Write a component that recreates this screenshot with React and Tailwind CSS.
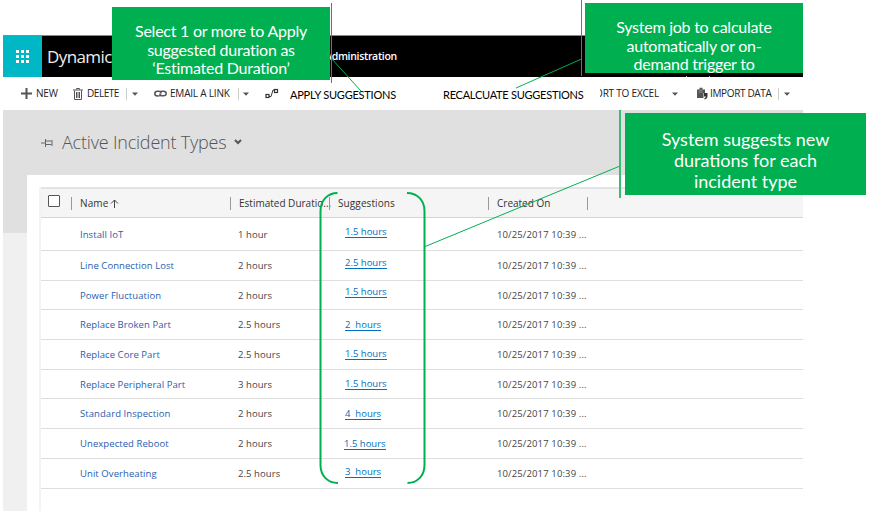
const UI = "font-['Open_Sans','Noto_Sans',sans-serif]";
const CAL = "font-['Lato','Open_Sans',sans-serif]";

const rows = [
  { name: 'Install IoT', est: '1 hour', sug: '1.5 hours', h: 'h-[33px]', pos: 'top-[-3px]' },
  { name: 'Line Connection Lost', est: '2 hours', sug: '2.5 hours', h: 'h-[30px]', pos: 'top-[-3px]' },
  { name: 'Power Fluctuation', est: '2 hours', sug: '1.5 hours', h: 'h-[29px]', pos: 'top-[-4px]' },
  { name: 'Replace Broken Part', est: '2.5 hours', sug: '2  hours', h: 'h-[30px]', pos: 'top-0' },
  { name: 'Replace Core Part', est: '2.5 hours', sug: '1.5 hours', h: 'h-[30px]', pos: 'top-[-1px]' },
  { name: 'Replace Peripheral Part', est: '3 hours', sug: '1.5 hours', h: 'h-[29px]', pos: 'top-[-1px]' },
  { name: 'Standard Inspection', est: '2 hours', sug: '4  hours', h: 'h-[30px]', pos: 'top-0' },
  { name: 'Unexpected Reboot', est: '2 hours', sug: '1.5 hours', h: 'h-[30px]', pos: 'top-0 left-[-1px]' },
  { name: 'Unit Overheating', est: '2.5 hours', sug: '3  hours', h: 'h-[30px]', pos: 'top-[-2px]' },
];

function Caret() {
  return (
    <svg width="6" height="4" viewBox="0 0 6 4" className="shrink-0">
      <path d="M0 .5h6L3 3.7z" fill="#555" />
    </svg>
  );
}

function Slot({ w, children }) {
  return <div className={`flex h-full shrink-0 items-center ${w}`}>{children}</div>;
}

function Toolbar() {
  const label = 'text-[10px] tracking-[-0.2px] whitespace-nowrap text-[#222]';
  const cal = `${CAL} text-[11px] whitespace-nowrap text-black pt-[3px]`;
  return (
    <div className="flex h-[33px] items-center bg-white pl-[18px]">
      <Slot w="w-[15px]">
        <svg width="11" height="11" viewBox="0 0 11 11"><path d="M5.5 0v11M0 5.5h11" stroke="#555" strokeWidth="2" /></svg>
      </Slot>
      <Slot w="w-[37px]"><span className={label}>NEW</span></Slot>
      <Slot w="w-[14px]">
        <svg width="10" height="12" viewBox="0 0 10 12" fill="none" stroke="#555">
          <path d="M0 2h10M3.5 1.6V.5h3v1.100M1.500 2.500v9h7v-9M3.500 4v6M5 4v6M6.500 4v6" />
        </svg>
      </Slot>
      <Slot w="w-[39px]"><span className={`${label} -mr-2 tracking-[-0.45px]`}>DELETE</span></Slot>
      <Slot w="w-[6px]"><span className="h-3 w-px bg-[#ccc]" /></Slot>
      <Slot w="w-[22px]"><Caret /></Slot>
      <Slot w="w-[16px]">
        <svg width="13" height="7" viewBox="0 0 13 7" fill="none" stroke="#555" strokeWidth="1.5">
          <path d="M7 5C6.5 6 5.4 6 3.6 6 1.6 6 .8 4.800 .8 3.500S1.800 1.200 3.500 1.200h1.200C6 1.200 7 2 7.200 3.500M6 2C6.500 1 7.700 1.200 9.300 1.200c2 0 2.900 1 2.900 2.300S11.200 5.800 9.500 5.800H8.300C7 5.800 6 5 5.800 3.600" />
        </svg>
      </Slot>
      <Slot w="w-[68px]"><span className={label}>EMAIL A LINK</span></Slot>
      <Slot w="w-[5px]"><span className="h-3 w-px bg-[#ccc]" /></Slot>
      <Slot w="w-[22px]"><Caret /></Slot>
      <Slot w="w-[25px]">
        <svg width="14" height="11" viewBox="0 0 14 11" fill="none" stroke="#333" strokeWidth="1.2">
          <rect x="1" y="6.500" width="3" height="3" /><rect x="9.500" y="1.500" width="3" height="3" />
          <path d="M4 8.500h2L8 2h2" strokeWidth="1" />
        </svg>
      </Slot>
      <Slot w="w-[153px]"><span className={`${cal} tracking-[-0.22px]`}>APPLY SUGGESTIONS</span></Slot>
      <Slot w="w-[157px]"><span className={`${cal} tracking-[-0.25px]`}>RECALCUATE SUGGESTIONS</span></Slot>
      <div className="flex h-full w-[59px] shrink-0 items-center justify-end overflow-hidden"><span className={label}>ORT TO EXCEL</span></div>
      <Slot w="w-[13px]" />
      <Slot w="w-[25px]"><Caret /></Slot>
      <Slot w="w-[13px]">
        <svg width="11" height="13" viewBox="0 0 11 13">
          <path d="M0 2.500h2.500V.8h3v1.700H8V6H6.500v5H0z" fill="#555" />
          <path d="M2.500 3.200h3M1.500 5h4" stroke="#aaa" strokeWidth=".7" />
          <path d="M7 6h3.500v3c0 2-1 3-3 3.500v-1.500c1-.3 1.500-1 1.500-1.500H7z" fill="#333" />
        </svg>
      </Slot>
      <Slot w="w-[68px]"><span className={`${label} -mr-2 tracking-[-0.35px]`}>IMPORT DATA</span></Slot>
      <Slot w="w-[6px]"><span className="h-3 w-px bg-[#ccc]" /></Slot>
      <Slot w="w-[10px]"><Caret /></Slot>
    </div>
  );
}

function HeadCell({ w, children }) {
  return (
    <div className={`flex shrink-0 items-center ${w}`}>
      <span className="mr-2 h-[13px] w-px shrink-0 bg-[#999]" />
      {children}
    </div>
  );
}

function Grid() {
  return (
    <div className="ml-3 flex-1 border-l-2 border-[#f3f3f3]">
      <div className="flex h-[31px] items-center border-t-2 border-b border-t-[#e4e4e4] border-b-[#d4d4d4] bg-[#f5f5f5] pt-px pl-[7px] text-[10px] text-[#333]">
        <span className="mb-[5px] h-3 w-[12px] shrink-0 rounded-[1px] border border-[#555] bg-white" />
        <div className="w-[11px] shrink-0" />
        <HeadCell w="w-[159px]">
          <span className="tracking-[0.1px]">Name</span>
          <svg width="9" height="9" viewBox="0 0 9 9" className="ml-0.5" fill="none" stroke="#444"><path d="M4.500 9V1M1 4.500L4.500 1 8 4.500" /></svg>
        </HeadCell>
        <HeadCell w="w-[99px]"><span className="whitespace-nowrap">Estimated Duratio...</span></HeadCell>
        <HeadCell w="w-[159px]"><span className="tracking-[0.1px]">Suggestions</span></HeadCell>
        <HeadCell w="w-[99px]">Created On</HeadCell>
        <HeadCell w="w-[20px]" />
      </div>
      {rows.map((r) => (
        <div key={r.name} className={`flex items-center border-b border-[#dedede] pt-[2px] pl-[39px] text-[9.5px] text-[#444] ${r.h}`}>
          <span className="w-[158px] shrink-0 whitespace-nowrap tracking-[0.07px] text-[#2a5db0]">{r.name}</span>
          <span className="w-[107px] shrink-0 tracking-[0.07px]">{r.est}</span>
          <span className="w-[152px] shrink-0">
            <span className={`relative inline-block whitespace-pre border-b border-[#0070c0] text-[9.5px] leading-[10px] text-[#0070c0] ${r.pos}`}>{r.sug}</span>
          </span>
          <span className="whitespace-nowrap tracking-[0.13px]">10/25/2017 10:39 ...</span>
        </div>
      ))}
    </div>
  );
}

function Callout({ box, lines, text }) {
  return (
    <div className={`absolute flex flex-col items-center bg-[#00b050] whitespace-nowrap text-white ${CAL} ${box} ${text}`}>
      {lines.map((l) => <span key={l}>{l}</span>)}
    </div>
  );
}

export default function App() {
  return (
    <div className={`relative h-[523px] w-[885px] overflow-hidden bg-white pt-[35px] pl-[3px] ${UI}`}>
      <div className="flex h-[476px] w-[800px] flex-col">
        <header className="flex h-[42px] shrink-0 items-center border-t border-[#888] bg-black text-white">
          <div className="flex h-full w-[39px] items-center justify-center bg-[#00b7c6]">
            <div className="grid grid-cols-3 gap-[2px]">
              {Array.from({ length: 9 }, (_, i) => <span key={i} className="size-[3px] bg-white" />)}
            </div>
          </div>
          <span className="w-[283px] pl-[5px] text-[17px] tracking-[-0.6px] text-[#eee]">Dynamics 365</span>
          <span className="text-[10.5px] font-semibold tracking-[-0.3px] whitespace-nowrap">Administration</span>
        </header>
        <Toolbar />
        <main className="flex flex-1 flex-col bg-[linear-gradient(#e0e0e0_123px,#f0f0f0_123px)]">
          <div className="flex h-[65px] shrink-0 items-center pl-[38px] text-[#555]">
            <svg width="12" height="8" viewBox="0 0 12 8" fill="none" stroke="#666"><path d="M0 4h4M4.500 0v8M4.500 2h6M4.500 5.500h6M11 1v6" /></svg>
            <h1 className="ml-[9px] text-[18px] font-light tracking-[-0.2px]">Active Incident Types</h1>
            <svg width="8" height="6" viewBox="0 0 8 6" className="mb-0.5 ml-2" fill="none" stroke="#555" strokeWidth="2"><path d="M1 1l3 3 3-3" /></svg>
          </div>
          <section className="ml-6 flex flex-1 flex-col bg-white pt-3">
            <Grid />
          </section>
        </main>
      </div>

      <svg className="pointer-events-none absolute inset-0" width="885" height="523" fill="none" stroke="#00b050">
        <path d="M337.500 193C328 193 320.500 200 320.500 211V465C320.500 476 328 483 338 483M407 193C417 193 424.500 200 424.500 211V465C424.500 476 417 483 407.500 483" strokeWidth="2" />
        <path d="M331 58L361 91M581.500 59L516 88M620 166L424 247" strokeWidth="1" />
        <path d="M331.500 3V83M581.500 0V76" strokeWidth="1" />
        <path d="M620 110V198" stroke="#36bf71" strokeWidth="2" />
        <path d="M686.500 76V77M709.500 76V77" stroke="#aaa" />
      </svg>
      <Callout box="top-[7px] left-[112px] h-[73px] w-[218px] pt-[15px]" text="text-[16px] leading-[18.5px] tracking-[-0.25px]" lines={['Select 1 or more to Apply', 'suggested duration as', '‘Estimated Duration’']} />
      <Callout box="top-[3px] left-[585px] h-[70px] w-[218px] pt-[15px]" text="text-[16px] leading-[18.5px] tracking-[-0.25px]" lines={['System job to calculate', 'automatically or on-', 'demand trigger to']} />
      <Callout box="top-[113px] left-[625px] h-[82px] w-[241px] pt-[16px]" text="text-[18px] leading-[21px]" lines={['System suggests new', 'durations for each', 'incident type']} />
    </div>
  );
}
